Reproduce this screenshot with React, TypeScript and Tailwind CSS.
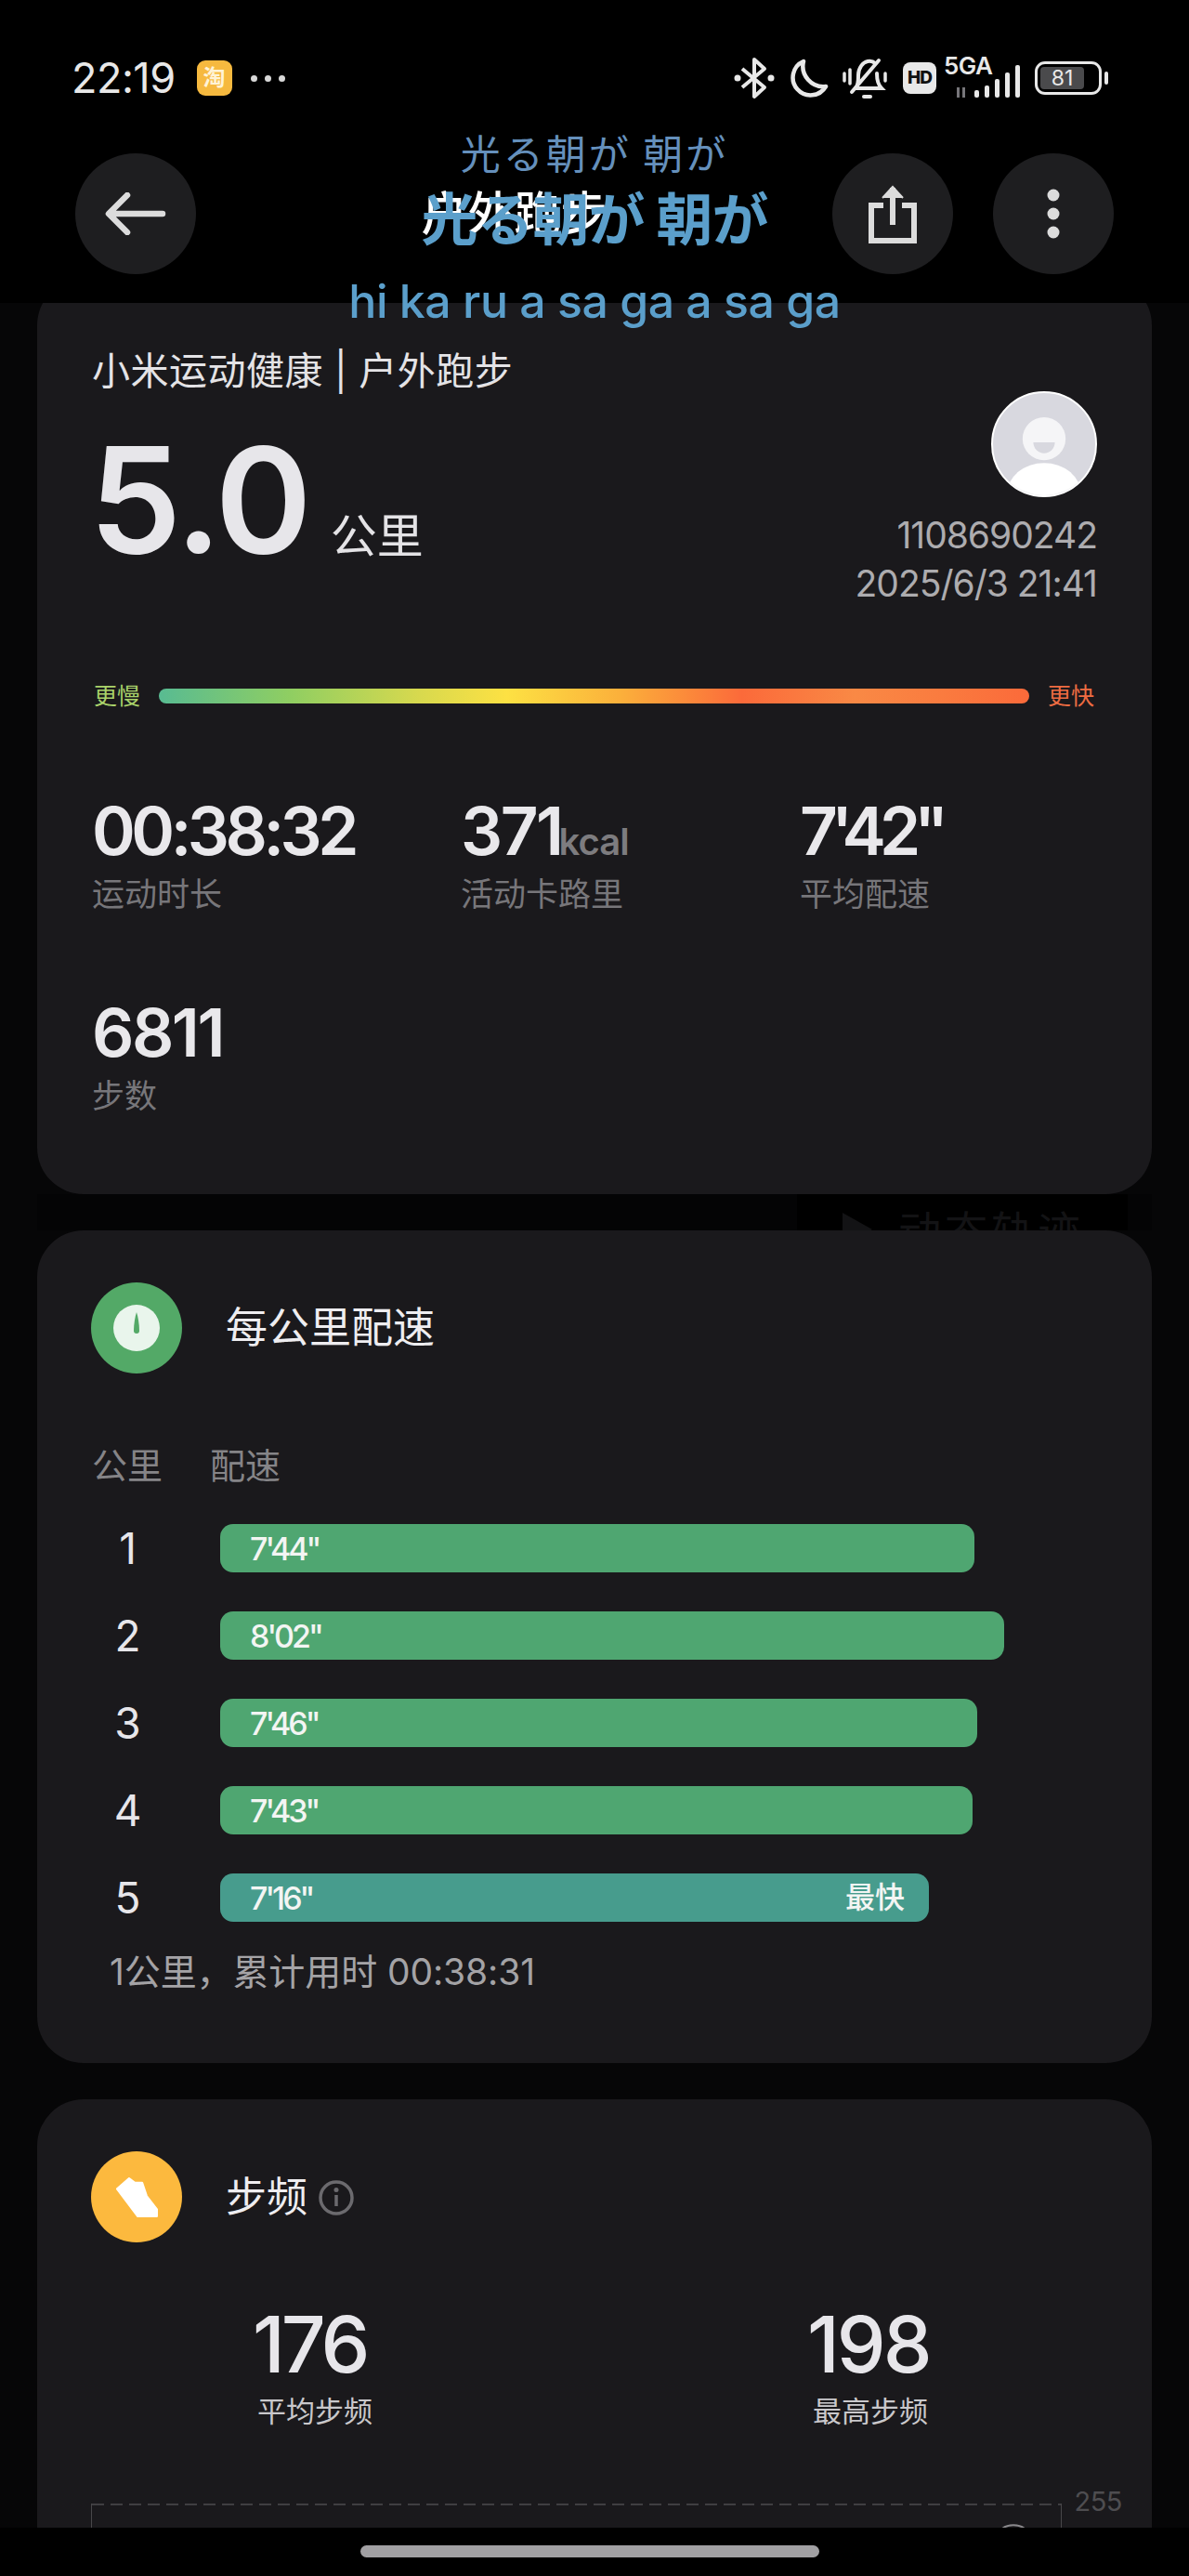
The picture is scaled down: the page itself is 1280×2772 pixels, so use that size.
import React from "react";

const sans = "font-['Inter','Noto_Sans_CJK_SC',sans-serif]";

const rows = [
  { n: "1", t: "7'44\"", w: 812 },
  { n: "2", t: "8'02\"", w: 844 },
  { n: "3", t: "7'46\"", w: 815 },
  { n: "4", t: "7'43\"", w: 810 },
  { n: "5", t: "7'16\"", w: 763, fast: true },
];

function Stat({ value, unit, label, className = "", track = "tracking-[-2.500px]" }: { value: string; unit?: string; label: string; className?: string; track?: string }) {
  return (
    <div className={className}>
      <div className={`h-[64px] flex items-baseline text-[71px] leading-[64px] font-semibold text-[#e9e8eb] ${track}`}>
        {value}
        {unit && <span className="text-[40px] text-[#7d7c7f] tracking-[-1px] -ml-[3px]">{unit}</span>}
      </div>
      <div className="mt-[14px] text-[35px] leading-[44px] text-[#77767a]">{label}</div>
    </div>
  );
}

function RoundButton({ children }: { children: React.ReactNode }) {
  return <div className="w-[130px] h-[130px] rounded-full bg-[#1e1e20] flex items-center justify-center">{children}</div>;
}

export default function App() {
  return (
    <div className={`${sans} relative w-[1280px] h-[2772px] overflow-hidden bg-[#060607] flex flex-col`}>
      {/* header */}
      <header className="relative z-10 h-[326px] shrink-0 bg-black">
        <div className="flex items-center justify-between h-[40px] mt-[64px] pl-[77px] pr-[87px] absolute inset-x-0 top-0">
          <div className="flex items-center">
            <span className="text-[45px] leading-[40px] text-[#e8e8e8] tracking-[-0.5px]">22:19</span>
            <span className="ml-[23px] w-[38px] h-[38px] rounded-[9px] bg-[#f6b93f] flex items-center justify-center text-[24px] leading-none font-bold text-[#fff3d6]">淘</span>
            <span className="ml-[20px] flex gap-[8px]">
              <i className="w-[7px] h-[7px] rounded-full bg-[#d8d8d8]" />
              <i className="w-[7px] h-[7px] rounded-full bg-[#d8d8d8]" />
              <i className="w-[7px] h-[7px] rounded-full bg-[#d8d8d8]" />
            </span>
          </div>
          <div className="flex items-center">
            <svg className="-ml-[4px]" width="44" height="46" viewBox="0 0 44 46" fill="none" stroke="#e8e8e8" strokeWidth="4" strokeLinejoin="round">
              <path d="M9 13l24 20-11 10V3l11 10L9 33" />
              <circle cx="4" cy="23" r="3.5" fill="#e8e8e8" stroke="none" />
              <circle cx="40" cy="23" r="3.5" fill="#e8e8e8" stroke="none" />
            </svg>
            <svg className="ml-[16px]" width="42" height="42" viewBox="0 0 42 42" fill="none" stroke="#e8e8e8" strokeWidth="4.5" strokeLinejoin="round">
              <path d="M15 3a19 19 0 1 0 24 27A22 22 0 0 1 15 3z" />
            </svg>
            <svg className="ml-[14px]" width="52" height="46" viewBox="0 0 52 46" fill="none" stroke="#e8e8e8" strokeWidth="4" strokeLinecap="round">
              <path d="M15 34c3-3 3-8 3-14 0-8 5-14 10-15 3-.5 6 0 8 2M38 18c0 7 1 12 5 16H15" />
              <path d="M40 4L11 38" />
              <path d="M24 43h7" />
              <path d="M3 18v8M9 14v15M47 18v8" strokeWidth="3.5" />
            </svg>
            <span className="ml-[14px] w-[36px] h-[34px] rounded-[8px] bg-[#e8e8e8] text-[#111] text-[19px] leading-[34px] font-extrabold text-center tracking-[-1px]">HD</span>
            <div className="relative ml-[14px] w-[80px] h-[46px]">
              <span className="absolute -left-[6px] -top-[4px] text-[26px] leading-[28px] font-semibold text-[#e8e8e8] tracking-[-0.5px]">5GA</span>
              <svg className="absolute left-0 top-0" width="80" height="46" viewBox="0 0 80 46" fill="#e8e8e8">
                <rect x="27" y="36" width="5" height="8" rx="2" />
                <rect x="38" y="31" width="5" height="13" rx="2" />
                <rect x="49" y="24" width="5" height="20" rx="2" />
                <rect x="60" y="17" width="5" height="27" rx="2" />
                <rect x="71" y="9" width="5" height="35" rx="2" />
                <rect x="8" y="33" width="3" height="11" fill="#77767a" />
                <rect x="14" y="33" width="3" height="11" fill="#77767a" />
              </svg>
            </div>
            <div className="ml-[12px] w-[72px] h-[36px] rounded-[11px] border-[3px] border-[#e8e8e8] p-[3px] flex">
              <div className="w-[47px] h-full rounded-[4px] bg-[#4a4a4c] text-[#e8e8e8] text-[23px] leading-[24px] text-center">81</div>
            </div>
            <span className="ml-[3px] w-[4px] h-[14px] rounded-full bg-[#e8e8e8]" />
          </div>
        </div>
        <div className="absolute left-[81px] right-[81px] top-[165px] flex items-center">
          <RoundButton>
            <svg width="66" height="46" viewBox="0 0 66 46" fill="none" stroke="#dcdcdc" strokeWidth="6.500" strokeLinecap="round" strokeLinejoin="round">
              <path d="M62 23H5M24 3L4 23l20 20" />
            </svg>
          </RoundButton>
          <div className="flex-1 text-center text-[50px] leading-[56px] font-medium text-white">户外跑步</div>
          <div className="flex gap-[43px]">
            <RoundButton>
              <svg width="52" height="64" viewBox="0 0 52 64" fill="none" stroke="#dcdcdc" strokeWidth="6">
                <path d="M16 23H3v38h46V23H36" />
                <path d="M26 44V4" />
                <path d="M15 15L26 3l11 12" fill="#dcdcdc" strokeWidth="2" />
              </svg>
            </RoundButton>
            <RoundButton>
              <svg width="14" height="54" viewBox="0 0 14 54" fill="#dcdcdc">
                <circle cx="7" cy="7" r="6.5" />
                <circle cx="7" cy="27" r="6.5" />
                <circle cx="7" cy="47" r="6.5" />
              </svg>
            </RoundButton>
          </div>
        </div>
      </header>

      {/* lyric overlay */}
      <div className="absolute z-20 left-0 right-0 top-[138px] flex flex-col items-center">
        <div className="text-[43px] leading-[50px] text-[#6590bc] tracking-[3px] font-['Noto_Sans_CJK_JP',sans-serif]">光る朝が 朝が</div>
        <div className="mt-[7px] text-[61px] leading-[76px] font-bold text-[#5b9fcb] tracking-[-1px] font-['Noto_Sans_CJK_JP',sans-serif]">光る朝が 朝が</div>
        <div className="mt-[23px] text-[50px] leading-[60px] font-medium text-[#5b9fcb] tracking-[-0.5px]">hi ka ru a sa ga a sa ga</div>
      </div>

      {/* scrolling content */}
      <main className="flex-1 min-h-0 overflow-hidden px-[40px] -mt-[26px]">
        <section className="h-[985px] rounded-[50px] bg-[#1a191c] px-[59px] pt-[75px]">
          <div className="text-[41px] leading-[48px] text-[#e4e3e6] tracking-[0.5px]">小米运动健康 | 户外跑步</div>
          <div className="flex justify-between">
            <div className="flex items-baseline pt-[40px] -ml-[3px]">
              <span className="text-[158px] leading-[150px] font-semibold text-[#e7e6ea] tracking-[-3px]">5.0</span>
              <span className="ml-[23px] text-[50px] leading-[60px] text-[#e4e3e6]">公里</span>
            </div>
            <div className="-mt-[2px] flex flex-col items-end">
              <div className="w-[114px] h-[114px] rounded-full bg-[#d8d8df] border-[2px] border-white overflow-hidden">
                <svg viewBox="0 0 114 114" className="w-full h-full">
                  <circle cx="57" cy="51" r="24" fill="#f5f5f7" />
                  <path d="M45 55h24a12 12 0 0 1-24 0z" fill="#d8d8df" />
                  <ellipse cx="57" cy="112" rx="41" ry="34" fill="#fff" />
                </svg>
              </div>
              <div className="mt-[16px] text-[39px] leading-[50px] text-[#adacaf] tracking-[-1px]">1108690242</div>
              <div className="mt-[2px] text-[39px] leading-[50px] text-[#adacaf] tracking-[-1px]">2025/6/3 21:41</div>
            </div>
          </div>
          <div className="mt-[80px] flex items-center">
            <span className="text-[25px] leading-[32px] text-[#a9d26a] ml-[2px]">更慢</span>
            <div className="ml-[20px] flex-1 h-[16px] rounded-full bg-[linear-gradient(90deg,#58bb92_0%,#8fce62_15%,#d8d94e_30%,#fde143_40%,#fbb03b_53%,#fb6a3a_67%,#f98945_80%,#fa7b3f_90%,#fb6a3a_100%)]" />
            <span className="ml-[20px] text-[25px] leading-[32px] text-[#ee6c42] mr-[3px]">更快</span>
          </div>
          <div className="mt-[97px] flex">
            <Stat className="w-[397px]" value="00:38:32" label="运动时长" track="tracking-[-4.500px]" />
            <Stat className="w-[365px]" value="371" unit="kcal" label="活动卡路里" />
            <Stat value={"7'42\""} label="平均配速" track="tracking-[-7px]" />
          </div>
          <Stat className="mt-[95px]" value="6811" label="步数" />
        </section>

        <div className="relative h-[39px] overflow-hidden bg-[#040405]">
          <div className="absolute right-[26px] -top-[40px] w-[356px] h-[120px] rounded-[30px] bg-black flex items-start justify-center gap-[28px] pt-[52px]">
            <svg className="mt-[6px]" width="34" height="40" viewBox="0 0 34 40" fill="#131315">
              <path d="M2 2l32 18L2 38z" />
            </svg>
            <span className="text-[46px] leading-[56px] text-[#131315] tracking-[4px]">动态轨迹</span>
          </div>
        </div>

        <section className="h-[896px] rounded-[50px] bg-[#1a191c] pl-[58px] pr-[59px] pt-[56px]">
          <div className="flex items-center">
            <div className="w-[98px] h-[98px] rounded-full bg-[#53a967] flex items-center justify-center">
              <svg width="50" height="50" viewBox="0 0 50 50">
                <circle cx="25" cy="25" r="25" fill="#e9f5ec" />
                <path d="M25 8c1.5 5 3 12 3 20a3 3 0 0 1-6 0c0-8 1.500-15 3-20z" fill="#53a967" />
              </svg>
            </div>
            <div className="ml-[47px] text-[45px] leading-[60px] text-[#eeedf0]">每公里配速</div>
          </div>
          <div className="mt-[69px] flex text-[38px] leading-[60px] text-[#858487]">
            <span className="ml-[1px] w-[127px]">公里</span>
            <span>配速</span>
          </div>
          <div className="mt-[33px] flex flex-col gap-[42px]">
            {rows.map((r) => (
              <div key={r.n} className="flex items-center h-[52px]">
                <span className="w-[79px] text-center text-[46px] font-normal text-[#e7e6ea]">{r.n}</span>
                <div
                  className={`ml-[60px] h-[52px] rounded-[14px] pl-[32px] pr-[26px] flex items-center justify-between text-[34px] font-medium text-[#f3f5f3] tracking-[-3px] ${r.fast ? "bg-[#479c8d]" : "bg-[#4fa671]"}`}
                  style={{ width: r.w }}
                >
                  <span>{r.t}</span>
                  {r.fast && <span className="tracking-normal text-[32px]">最快</span>}
                </div>
              </div>
            ))}
          </div>
          <div className="mt-[24px] ml-[20px] text-[39px] leading-[60px] text-[#a4a3a6] tracking-[-0.1px]">1公里，累计用时 00:38:31</div>
        </section>

        <section className="mt-[39px] h-[600px] rounded-t-[50px] bg-[#1a191c] pl-[58px] pr-[33px] pt-[56px]">
          <div className="flex items-center">
            <div className="w-[98px] h-[98px] rounded-full bg-[#fcb93e] flex items-center justify-center">
              <svg width="45" height="43" viewBox="-4 -4 143 136" fill="#fff" stroke="#fff" strokeWidth="8" strokeLinejoin="round">
                <path d="M0 35L40 0 60 15 85 15 100 60 135 105V128H70z" />
              </svg>
            </div>
            <div className="ml-[47px] text-[44px] leading-[60px] text-[#eeedf0]">步频</div>
            <svg className="ml-[12px] mt-[2px]" width="38" height="38" viewBox="0 0 38 38" fill="none" stroke="#6b6a6e" strokeWidth="3.500">
              <circle cx="19" cy="19" r="17" />
              <path d="M19 16v12" />
              <circle cx="19" cy="10.500" r="2.500" fill="#6b6a6e" stroke="none" />
            </svg>
          </div>
          <div className="mt-[71px] flex">
            <div className="w-[304px] ml-[175px] flex flex-col items-start">
              <div className="text-[84px] leading-[78px] font-medium text-[#e7e6ea] tracking-[-4px] -ml-[1px]">176</div>
              <div className="mt-[11px] ml-[4px] text-[31px] leading-[44px] text-[#c9c8cb]">平均步频</div>
            </div>
            <div className="ml-[292px] flex flex-col items-start">
              <div className="text-[84px] leading-[78px] font-medium text-[#e7e6ea] tracking-[-3px]">198</div>
              <div className="mt-[11px] ml-[6px] text-[31px] leading-[44px] text-[#c9c8cb]">最高步频</div>
            </div>
          </div>
          <div className="relative mt-[77px] h-[60px] w-[1045px] border-x border-[#48474a]">
            <div className="h-[2px] bg-[repeating-linear-gradient(90deg,#3f3e41_0_13px,transparent_13px_20px)]" />
            <svg className="absolute right-[38px] top-[22px]" width="26" height="6" viewBox="0 0 26 6" fill="none" stroke="#8a898c" strokeWidth="2">
              <path d="M1 5c6-5 18-5 24 0" />
            </svg>
            <span className="absolute -right-[66px] -top-[20px] text-[29px] leading-[36px] text-[#4e4d50] tracking-[-0.5px]">255</span>
          </div>
        </section>
      </main>

      {/* home indicator */}
      <footer className="relative z-10 h-[52px] shrink-0 bg-black flex justify-center pt-[19px] pr-[10px]">
        <div className="w-[494px] h-[13px] rounded-full bg-[#a1a0a3]" />
      </footer>
    </div>
  );
}
